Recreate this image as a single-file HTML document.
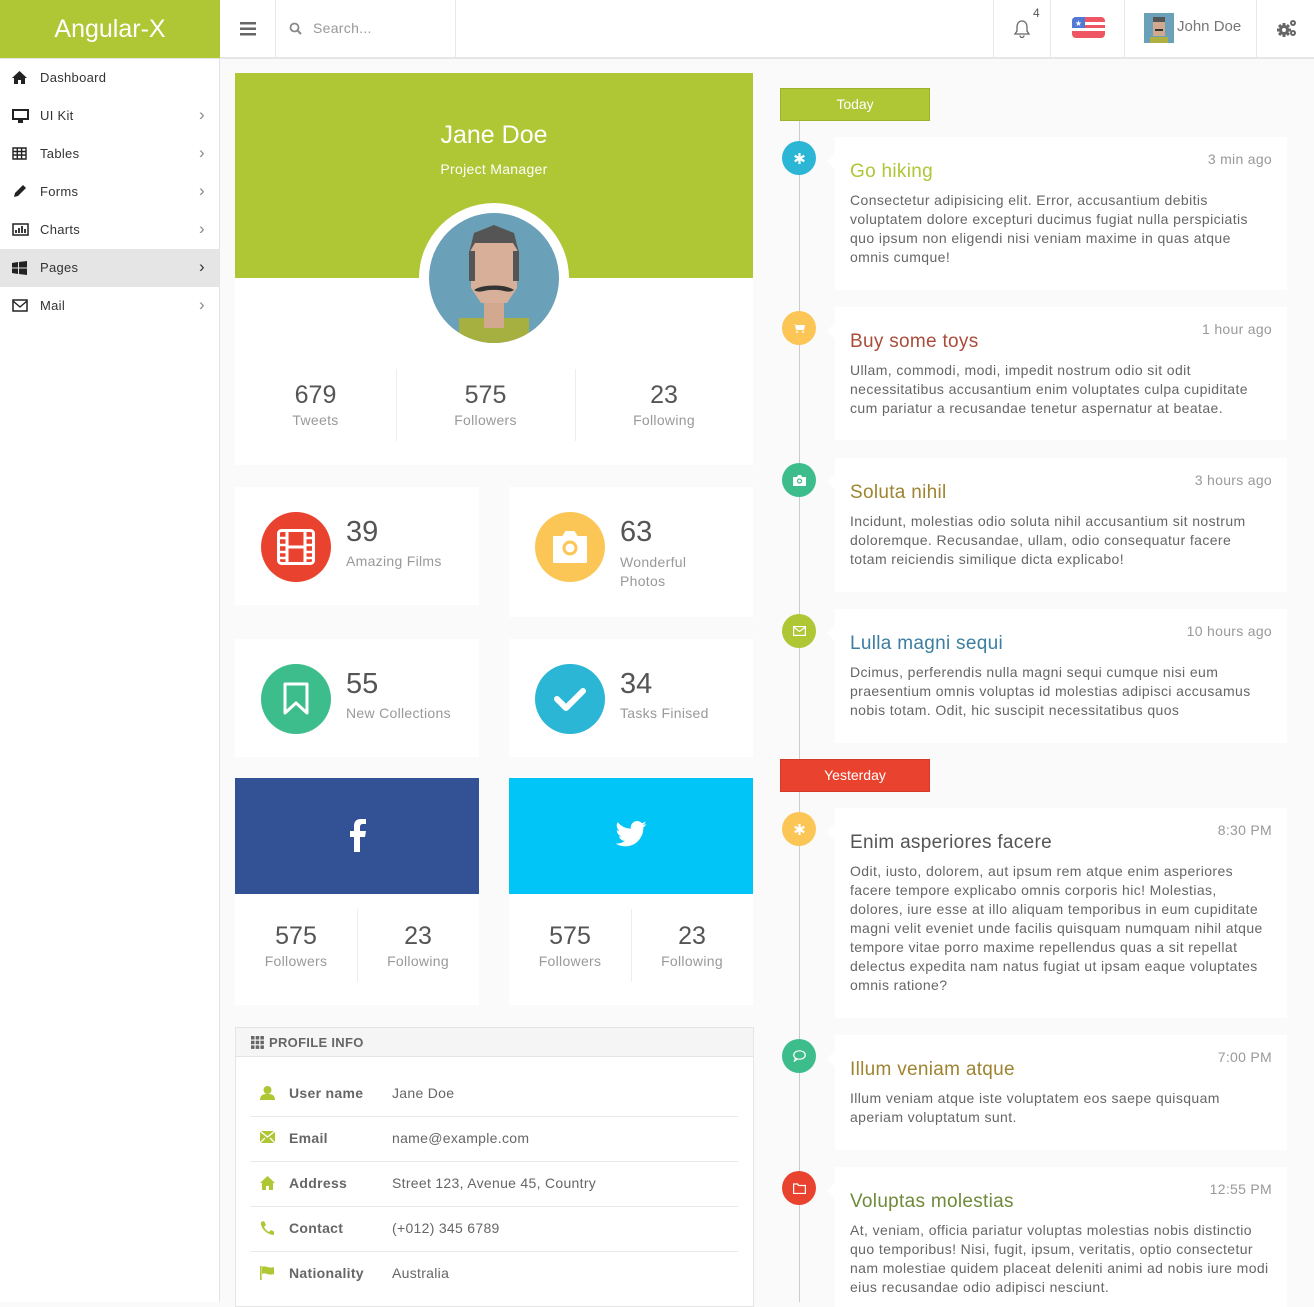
<!DOCTYPE html>
<html><head><meta charset="utf-8"><style>
*{box-sizing:border-box;margin:0;padding:0}
body{width:1314px;height:1302px;overflow:hidden;background:#fafafa;font-family:"Liberation Sans",sans-serif;color:#666;position:relative;font-size:14px}
.a{position:absolute}
.top{left:0;top:0;width:1314px;height:59px;background:#fff;border-bottom:2px solid #e6e6e6}
.logo{left:0;top:0;width:220px;height:58px;background:#afc635;color:#fff;font-size:25px;text-align:center;line-height:58px}
.vl{top:0;height:58px;width:1px;background:#e8e8e8}
.side{left:0;top:59px;width:220px;height:1243px;background:#fff;border-right:1px solid #e3e3e3}
.si{position:absolute;left:0;width:219px;height:38px;line-height:38px;font-size:13px;color:#333;padding-left:40px;letter-spacing:.3px}
.si svg{position:absolute;left:12px;top:12px}
.si .ch{position:absolute;right:14px;top:-1px;color:#888;font-size:17px}
.card{background:#fff;position:absolute}
.num{font-size:25px;color:#555}
.lbl{font-size:14px;color:#999;letter-spacing:.3px}
.circ{position:absolute;width:70px;height:70px;border-radius:50%}
.tl{position:absolute;background:#fff;left:835px;width:452px;padding:20px 15px 0 15px}
.tl h3{font-weight:normal;font-size:19px;margin-top:4px;margin-bottom:8px;letter-spacing:.3px}
.tl p{font-size:14px;line-height:19px;color:#666;letter-spacing:.4px}
.tl .t{position:absolute;right:15px;top:14px;font-size:14px;color:#999;letter-spacing:.3px}
.tl:before{content:"";position:absolute;left:-8px;top:16px;border:8px solid transparent;border-left:0;border-right-color:#fff}
.dot{position:absolute;left:782px;width:34px;height:34px;border-radius:50%;display:flex;align-items:center;justify-content:center}
.row{position:absolute;left:250px;width:488px;height:45px;border-bottom:1px solid #eaeaea;font-size:14px;line-height:43px;letter-spacing:.3px}
.row b{position:absolute;left:39px;color:#666}
.row span{position:absolute;left:142px;color:#666}
.row svg{position:absolute;left:10px;top:14px}
</style></head><body>
<div class="a top"></div>
<div class="a logo">Angular-X</div>
<div class="a vl" style="left:275px"></div>
<div class="a vl" style="left:455px"></div>
<div class="a vl" style="left:993px"></div>
<div class="a vl" style="left:1050px"></div>
<div class="a vl" style="left:1124px"></div>
<div class="a vl" style="left:1256px"></div>
<svg class="a" style="left:240px;top:22px" width="16" height="14"><rect y="0" width="16" height="2.5" fill="#666"/><rect y="5.5" width="16" height="2.5" fill="#666"/><rect y="11" width="16" height="2.5" fill="#666"/></svg>
<svg class="a" style="left:289px;top:22px" width="13" height="13"><circle cx="5.5" cy="5.5" r="4" stroke="#888" stroke-width="1.8" fill="none"/><line x1="8.5" y1="8.5" x2="12" y2="12" stroke="#888" stroke-width="2"/></svg>
<div class="a" style="left:313px;top:20px;font-size:14px;color:#999;letter-spacing:.3px">Search...</div>
<svg class="a" style="left:1013px;top:19px" width="18" height="20"><path d="M9 2c-3.5 0-5 3-5 6v4l-2 3h14l-2-3V8c0-3-1.5-6-5-6zM7 16.5a2 2 0 0 0 4 0" stroke="#666" stroke-width="1.3" fill="none"/></svg>
<div class="a" style="left:1033px;top:6px;font-size:12px;color:#555">4</div>
<svg class="a" style="left:1072px;top:17px" width="33" height="21"><rect width="33" height="21" rx="4" fill="#ef5563"/><rect y="5" width="33" height="3" fill="#fff"/><rect y="11" width="33" height="3" fill="#fff"/><path d="M4 0h9v11H0V4a4 4 0 0 1 4-4z" fill="#4f79d4"/><text x="6.5" y="9" font-size="8" fill="#fff" text-anchor="middle">★</text></svg>
<svg class="a" style="left:1144px;top:13px" width="30" height="30"><rect width="30" height="30" fill="#6aa0b8"/><rect x="9" y="5" width="12" height="18" fill="#d2a88e"/><rect x="9" y="4" width="12" height="5" fill="#555"/><rect x="11" y="16" width="8" height="2" fill="#333"/><rect x="6" y="24" width="18" height="6" fill="#b0b040"/></svg>
<div class="a" style="left:1177px;top:18px;font-size:15px;color:#777">John Doe</div>
<svg class="a" style="left:1276px;top:18px" width="22" height="20"><g fill="#666"><circle cx="8" cy="12" r="5"/><rect x="6.5" y="5" width="3" height="14"/><rect x="1" y="10.5" width="14" height="3"/><rect x="6.5" y="5" width="3" height="14" transform="rotate(45 8 12)"/><rect x="6.5" y="5" width="3" height="14" transform="rotate(-45 8 12)"/><circle cx="17" cy="5" r="3"/><circle cx="17" cy="15" r="3"/></g><circle cx="8" cy="12" r="2" fill="#fff"/><circle cx="17" cy="5" r="1" fill="#fff"/><circle cx="17" cy="15" r="1" fill="#fff"/></svg>

<div class="a side">
<div class="si" style="top:0">Dashboard<svg width="15" height="13"><path d="M7.5 0L0 7h2v6h4V9h3v4h4V7h2z" fill="#222"/></svg></div>
<div class="si" style="top:38px">UI Kit<svg width="17" height="14"><rect x="1" y="1" width="15" height="9" stroke="#222" stroke-width="2" fill="none"/><rect x="6" y="11" width="5" height="3" fill="#222"/></svg><span class="ch">&#x203A;</span></div>
<div class="si" style="top:76px">Tables<svg width="15" height="13"><path d="M1 1h13v11H1zM1 4.5h13M1 8h13M5.3 1v11M9.6 1v11" stroke="#222" stroke-width="1.4" fill="none"/></svg><span class="ch">&#x203A;</span></div>
<div class="si" style="top:114px">Forms<svg width="15" height="14"><path d="M2 12l1-4 8-8 3 3-8 8z" fill="#222"/></svg><span class="ch">&#x203A;</span></div>
<div class="si" style="top:152px">Charts<svg width="17" height="13"><rect x="1" y="1" width="15" height="11" stroke="#222" stroke-width="1.5" fill="none"/><path d="M4 10V7M7 10V5M10 10V3M13 10V6" stroke="#222" stroke-width="1.8"/></svg><span class="ch">&#x203A;</span></div>
<div class="si" style="top:190px;background:#e5e5e5">Pages<svg width="15" height="14"><path d="M0 2l6-1v5.5H0zM7 1l8-1v6.5H7zM0 7.5h6V13l-6-1zM7 7.5h8V14l-8-1z" fill="#222"/></svg><span class="ch" style="color:#333">&#x203A;</span></div>
<div class="si" style="top:228px">Mail<svg width="16" height="13"><rect x="1" y="1" width="14" height="11" stroke="#222" stroke-width="1.5" fill="none"/><path d="M1 2l7 6 7-6" stroke="#222" stroke-width="1.4" fill="none"/></svg><span class="ch">&#x203A;</span></div>
</div>

<div class="card" style="left:235px;top:73px;width:518px;height:392px"></div>
<div class="a" style="left:235px;top:73px;width:518px;height:205px;background:#afc635"></div>
<div class="a" style="left:235px;top:121px;width:518px;text-align:center;color:#fff;font-size:25px">Jane Doe</div>
<div class="a" style="left:235px;top:161px;width:518px;text-align:center;color:#fff;font-size:14px;letter-spacing:.3px">Project Manager</div>
<div class="a" style="left:419px;top:203px;width:150px;height:150px;border-radius:50%;background:#fff"></div>
<svg class="a" style="left:429px;top:213px" width="130" height="130"><defs><clipPath id="c"><circle cx="65" cy="65" r="65"/></clipPath></defs><g clip-path="url(#c)"><rect width="130" height="130" fill="#6aa0b8"/><rect x="30" y="105" width="70" height="30" fill="#a6b040"/><rect x="55" y="85" width="20" height="30" fill="#d2a88e"/><path d="M42 30h46v45l-10 15H52L42 75z" fill="#d8b09a"/><path d="M40 40l5-20 20-8 20 8 5 20-6-10H46z" fill="#555"/><path d="M40 38h6v30h-6zM84 38h6v30h-6z" fill="#555"/><path d="M45 77c8-6 32-6 40 0-6 4-12-1-20 0-8-1-14 4-20 0z" fill="#333"/></g></svg>
<div class="a" style="left:396px;top:369px;width:1px;height:72px;background:#eee"></div>
<div class="a" style="left:575px;top:369px;width:1px;height:72px;background:#eee"></div>
<div class="a" style="left:235px;top:381px;width:161px;text-align:center"><div class="num">679</div><div class="lbl" style="margin-top:2px">Tweets</div></div>
<div class="a" style="left:396px;top:381px;width:179px;text-align:center"><div class="num">575</div><div class="lbl" style="margin-top:2px">Followers</div></div>
<div class="a" style="left:575px;top:381px;width:178px;text-align:center"><div class="num">23</div><div class="lbl" style="margin-top:2px">Following</div></div>

<div class="card" style="left:235px;top:487px;width:244px;height:118px"></div>
<div class="card" style="left:509px;top:487px;width:244px;height:130px"></div>
<div class="card" style="left:235px;top:639px;width:244px;height:118px"></div>
<div class="card" style="left:509px;top:639px;width:244px;height:118px"></div>
<div class="circ" style="left:261px;top:512px;background:#e9432f"><svg style="margin:17px 0 0 16px" width="38" height="36"><rect x="1.5" y="1.5" width="35" height="33" rx="3" fill="none" stroke="#fff" stroke-width="3"/><path d="M10 2v32M28 2v32M10 18h18" stroke="#fff" stroke-width="3"/><path d="M3 9h6M3 16h6M3 23h6M3 29h6M29 9h6M29 16h6M29 23h6M29 29h6" stroke="#fff" stroke-width="2.5"/></svg></div>
<div class="a" style="left:346px;top:516px"><div class="num" style="font-size:29px">39</div><div class="lbl" style="margin-top:4px">Amazing Films</div></div>
<div class="circ" style="left:535px;top:512px;background:#fbc656"><svg style="margin:17px 0 0 16px" width="38" height="36"><path d="M3 8h9l3-5h8l3 5h9v25H3z" fill="#fff" stroke="#fff" stroke-width="2" stroke-linejoin="round"/><circle cx="19" cy="19" r="6" fill="none" stroke="#fbc656" stroke-width="3"/></svg></div>
<div class="a" style="left:620px;top:516px"><div class="num" style="font-size:29px">63</div><div class="lbl" style="line-height:19px;margin-top:4px">Wonderful<br>Photos</div></div>
<div class="circ" style="left:261px;top:664px;background:#3ebd8c"><svg style="margin:18px 0 0 22px" width="26" height="34"><path d="M2 2h22v29l-11-10-11 10z" fill="none" stroke="#fff" stroke-width="3" stroke-linejoin="round"/></svg></div>
<div class="a" style="left:346px;top:668px"><div class="num" style="font-size:29px">55</div><div class="lbl" style="margin-top:4px">New Collections</div></div>
<div class="circ" style="left:535px;top:664px;background:#2bb6d5"><svg style="margin:22px 0 0 18px" width="34" height="26"><path d="M4 13l9 9L30 5" fill="none" stroke="#fff" stroke-width="6" stroke-linecap="round" stroke-linejoin="round"/></svg></div>
<div class="a" style="left:620px;top:668px"><div class="num" style="font-size:29px">34</div><div class="lbl" style="margin-top:4px">Tasks Finised</div></div>

<div class="card" style="left:235px;top:778px;width:244px;height:227px"></div>
<div class="card" style="left:509px;top:778px;width:244px;height:227px"></div>
<div class="a" style="left:235px;top:778px;width:244px;height:116px;background:#325295"></div>
<div class="a" style="left:509px;top:778px;width:244px;height:116px;background:#00c5f6"></div>
<svg class="a" style="left:347px;top:818px" width="20" height="34"><path d="M13 34V19h5l1-6h-6V9c0-2 1-3 3-3h3V1h-5c-5 0-7 3-7 7v5H3v6h4v15z" fill="#fff"/></svg>
<svg class="a" style="left:615px;top:821px" width="32" height="26" viewBox="0 0 24 20"><path d="M24 2.3c-.9.4-1.8.7-2.8.8 1-.6 1.8-1.6 2.2-2.7-1 .6-2 1-3.1 1.2A4.9 4.9 0 0 0 11.9 6 14 14 0 0 1 1.7.9a4.9 4.9 0 0 0 1.5 6.6c-.8 0-1.6-.2-2.2-.6 0 2.4 1.700 4.4 3.9 4.8-.7.2-1.5.2-2.2.1.6 2 2.4 3.4 4.6 3.4A9.9 9.9 0 0 1 0 17.3 14 14 0 0 0 7.5 19.5c9.1 0 14-7.5 14-14v-.6c1-.7 1.8-1.6 2.5-2.6z" fill="#fff"/></svg>
<div class="a" style="left:357px;top:909px;width:1px;height:73px;background:#eee"></div>
<div class="a" style="left:631px;top:909px;width:1px;height:73px;background:#eee"></div>
<div class="a" style="left:235px;top:922px;width:122px;text-align:center"><div class="num">575</div><div class="lbl" style="margin-top:2px">Followers</div></div>
<div class="a" style="left:357px;top:922px;width:122px;text-align:center"><div class="num">23</div><div class="lbl" style="margin-top:2px">Following</div></div>
<div class="a" style="left:509px;top:922px;width:122px;text-align:center"><div class="num">575</div><div class="lbl" style="margin-top:2px">Followers</div></div>
<div class="a" style="left:631px;top:922px;width:122px;text-align:center"><div class="num">23</div><div class="lbl" style="margin-top:2px">Following</div></div>

<div class="card" style="left:235px;top:1027px;width:519px;height:280px;border:1px solid #e5e5e5"></div>
<div class="a" style="left:236px;top:1028px;width:517px;height:29px;background:#f5f5f5;border-bottom:1px solid #e5e5e5"></div>
<svg class="a" style="left:251px;top:1036px" width="13" height="13"><g fill="#666"><rect x="0" y="0" width="3.5" height="3.5"/><rect x="4.7" y="0" width="3.5" height="3.5"/><rect x="9.4" y="0" width="3.5" height="3.5"/><rect x="0" y="4.7" width="3.5" height="3.5"/><rect x="4.7" y="4.7" width="3.5" height="3.5"/><rect x="9.4" y="4.7" width="3.5" height="3.5"/><rect x="0" y="9.4" width="3.5" height="3.5"/><rect x="4.7" y="9.4" width="3.5" height="3.5"/><rect x="9.4" y="9.4" width="3.5" height="3.5"/></g></svg>
<div class="a" style="left:269px;top:1035px;font-size:13px;font-weight:bold;color:#666;letter-spacing:.3px">PROFILE INFO</div>
<div class="row" style="top:1072px"><svg width="15" height="14"><circle cx="7.5" cy="4" r="4" fill="#afc635"/><path d="M0 14c0-5 3-6 7.5-6s7.5 1 7.5 6z" fill="#afc635"/></svg><b>User name</b><span>Jane Doe</span></div>
<div class="row" style="top:1117px"><svg width="15" height="12"><path d="M0 0h15v12H0z" fill="#afc635"/><path d="M0 0l7.5 6L15 0M0 12l5-5M15 12l-5-5" stroke="#fff" stroke-width="1.3" fill="none"/></svg><b>Email</b><span>name@example.com</span></div>
<div class="row" style="top:1162px"><svg width="15" height="14"><path d="M7.5 0L0 7h2v7h4V10h3v4h4V7h2z" fill="#afc635"/></svg><b>Address</b><span>Street 123, Avenue 45, Country</span></div>
<div class="row" style="top:1207px"><svg width="14" height="14"><path d="M1 1l3-1 2 4-2 2c1 2 3 4 5 5l2-2 4 2-1 3C7 14 0 7 1 1z" fill="#afc635"/></svg><b>Contact</b><span>(+012) 345 6789</span></div>
<div class="row" style="top:1252px;border:none"><svg width="14" height="14"><rect x="0" y="0" width="1.6" height="14" fill="#afc635"/><path d="M2 1c4-2 6 2 12 0v7c-6 2-8-2-12 0z" fill="#afc635"/></svg><b>Nationality</b><span>Australia</span></div>

<div class="a" style="left:799px;top:121px;width:1px;height:1181px;background:#ccc"></div>
<div class="a" style="left:780px;top:88px;width:150px;height:33px;background:#afc635;border:1px solid #9cb22a;color:#fff;text-align:center;line-height:31px;font-size:14px">Today</div>
<div class="a" style="left:780px;top:759px;width:150px;height:33px;background:#e9432f;border:1px solid #d33a27;color:#fff;text-align:center;line-height:31px;font-size:14px">Yesterday</div>

<div class="tl" style="top:137px;height:153px"><span class="t">3 min ago</span><h3 style="color:#afc635">Go hiking</h3><p>Consectetur adipisicing elit. Error, accusantium debitis voluptatem dolore excepturi ducimus fugiat nulla perspiciatis quo ipsum non eligendi nisi veniam maxime in quas atque omnis cumque!</p></div>
<div class="tl" style="top:307px;height:133px"><span class="t">1 hour ago</span><h3 style="color:#a94c3a">Buy some toys</h3><p>Ullam, commodi, modi, impedit nostrum odio sit odit necessitatibus accusantium enim voluptates culpa cupiditate cum pariatur a recusandae tenetur aspernatur at beatae.</p></div>
<div class="tl" style="top:458px;height:134px"><span class="t">3 hours ago</span><h3 style="color:#9e8430">Soluta nihil</h3><p>Incidunt, molestias odio soluta nihil accusantium sit nostrum doloremque. Recusandae, ullam, odio consequatur facere totam reiciendis similique dicta explicabo!</p></div>
<div class="tl" style="top:609px;height:134px"><span class="t">10 hours ago</span><h3 style="color:#3a7ea0">Lulla magni sequi</h3><p>Dcimus, perferendis nulla magni sequi cumque nisi eum praesentium omnis voluptas id molestias adipisci accusamus nobis totam. Odit, hic suscipit necessitatibus quos</p></div>
<div class="tl" style="top:808px;height:210px"><span class="t">8:30 PM</span><h3 style="color:#555">Enim asperiores facere</h3><p>Odit, iusto, dolorem, aut ipsum rem atque enim asperiores facere tempore explicabo omnis corporis hic! Molestias, dolores, iure esse at illo aliquam temporibus in eum cupiditate magni velit eveniet unde facilis quisquam numquam nihil atque tempore vitae porro maxime repellendus quas a sit repellat delectus expedita nam natus fugiat ut ipsam eaque voluptates omnis ratione?</p></div>
<div class="tl" style="top:1035px;height:115px"><span class="t">7:00 PM</span><h3 style="color:#9e8430">Illum veniam atque</h3><p>Illum veniam atque iste voluptatem eos saepe quisquam aperiam voluptatum sunt.</p></div>
<div class="tl" style="top:1167px;height:140px"><span class="t">12:55 PM</span><h3 style="color:#6f8a3a">Voluptas molestias</h3><p>At, veniam, officia pariatur voluptas molestias nobis distinctio quo temporibus! Nisi, fugit, ipsum, veritatis, optio consectetur nam molestiae quidem placeat deleniti animi ad nobis iure modi eius recusandae odio adipisci nesciunt.</p></div>

<div class="dot" style="top:141px;background:#2bb6d5"><svg width="11" height="11"><path d="M5.5 0v11M0.7 2.75l9.6 5.5M0.7 8.25l9.6-5.5" stroke="#fff" stroke-width="2.2"/></svg></div>
<div class="dot" style="top:311px;background:#fbc656"><svg width="12" height="10"><path d="M0 1h2l1 6h8l1-5H3" fill="#fff"/><circle cx="4" cy="9" r="1" fill="#fff"/><circle cx="10" cy="9" r="1" fill="#fff"/></svg></div>
<div class="dot" style="top:463px;background:#3ebd8c"><svg width="13" height="11"><path d="M0 2h4l1-2h3l1 2h4v9H0z" fill="#fff"/><circle cx="6.5" cy="6" r="2" fill="none" stroke="#3ebd8c" stroke-width="1.3"/></svg></div>
<div class="dot" style="top:614px;background:#afc635"><svg width="13" height="10"><rect x=".6" y=".6" width="11.8" height="8.8" fill="none" stroke="#fff" stroke-width="1.2"/><path d="M.6 1l5.9 4.5L12.4 1" fill="none" stroke="#fff" stroke-width="1.2"/></svg></div>
<div class="dot" style="top:812px;background:#fbc656"><svg width="11" height="11"><path d="M5.5 0v11M0.7 2.75l9.6 5.5M0.7 8.25l9.6-5.5" stroke="#fff" stroke-width="2.2"/></svg></div>
<div class="dot" style="top:1039px;background:#3ebd8c"><svg width="13" height="12"><ellipse cx="6.5" cy="5" rx="5.8" ry="4.2" fill="none" stroke="#fff" stroke-width="1.2"/><path d="M2.5 8l-1 3 3-2" fill="none" stroke="#fff" stroke-width="1.2"/></svg></div>
<div class="dot" style="top:1171px;background:#e9432f"><svg width="13" height="11"><path d="M.6 1h4l1 1.5h6.8v8H.6z" fill="none" stroke="#fff" stroke-width="1.2"/></svg></div>
</body></html>
